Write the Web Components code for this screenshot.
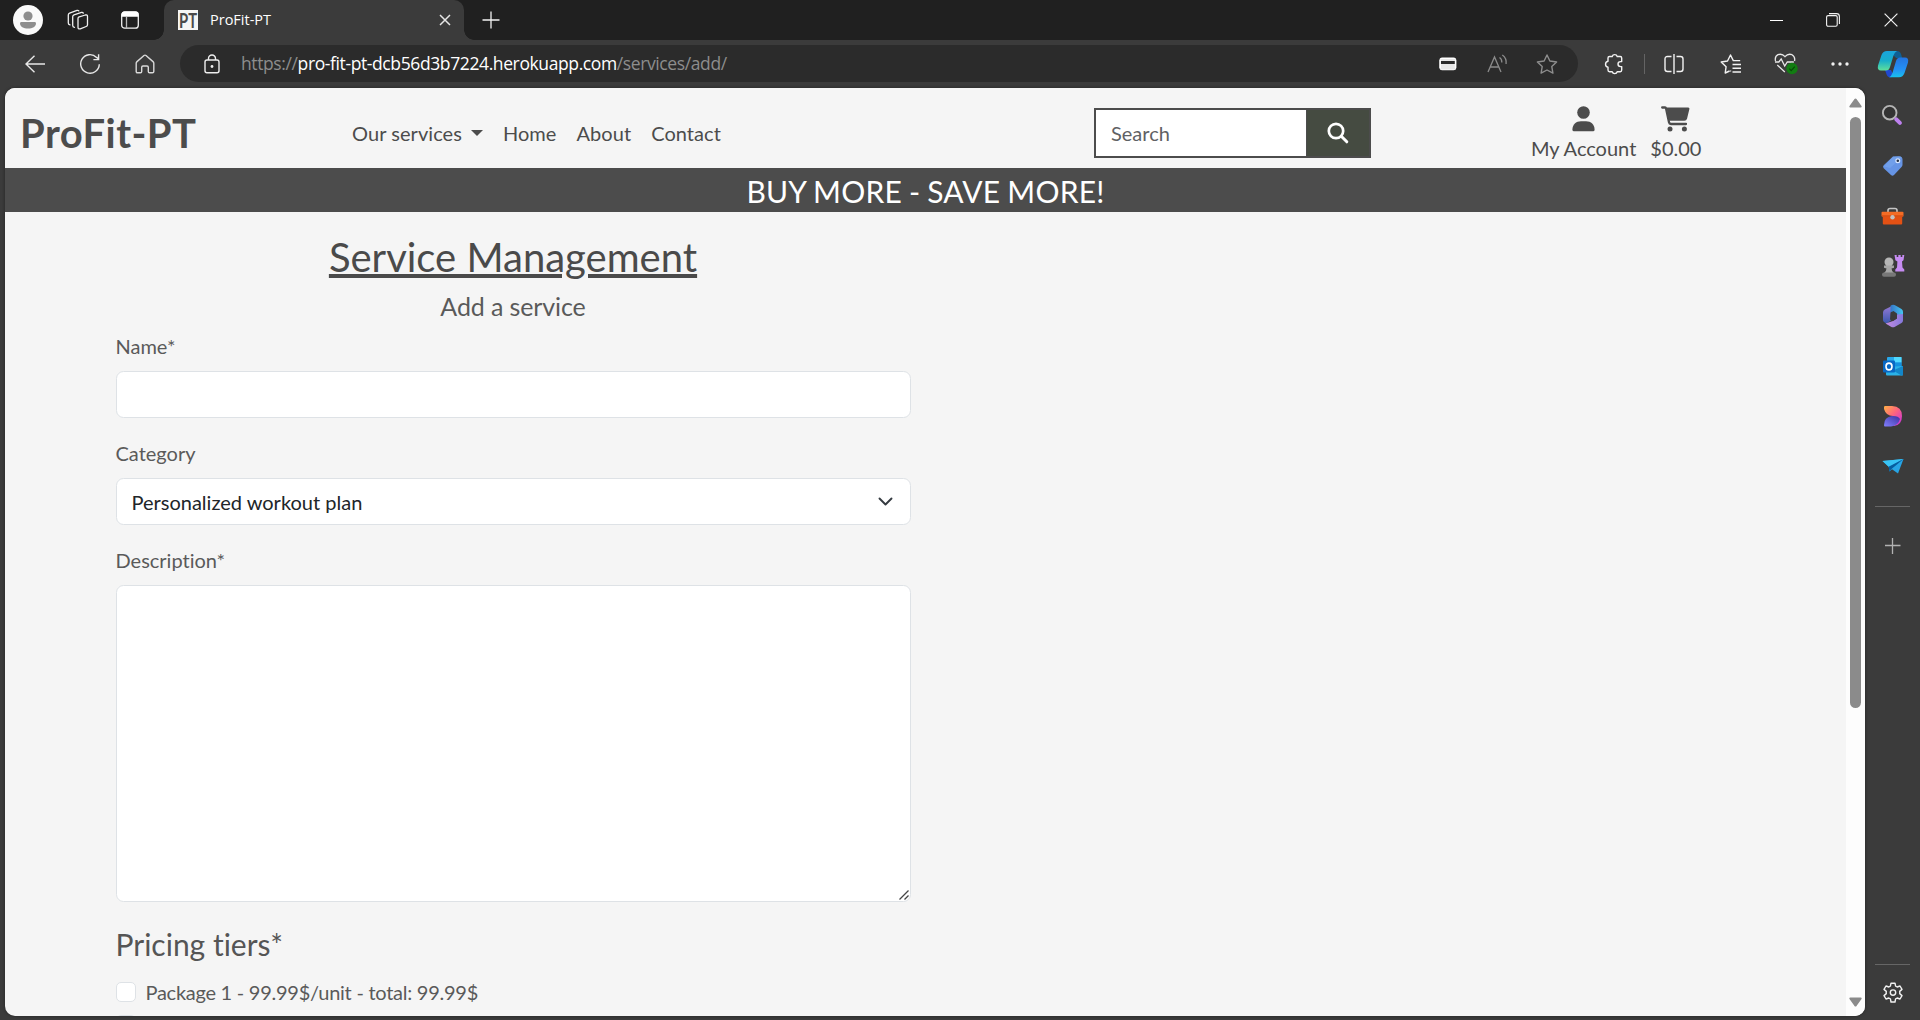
<!DOCTYPE html>
<html lang="en">
<head>
<meta charset="utf-8">
<title>ProFit-PT</title>
<style>
html,body{margin:0;height:100%;overflow:hidden;background:#3b3b3b}
body{font-family:Lato,"Liberation Sans",sans-serif;font-size:20px;line-height:30px;color:#4a4a4a;font-variant-ligatures:none}
</style>
</head>
<body>
<browser-window></browser-window>
<script>
const ICONS = {
avatar:[30,30,`<circle cx="15" cy="15" r="15" fill="#fafafa"/><circle cx="15" cy="11" r="4.6" fill="#8e8e8e"/><path d="M8 17h14q1 0 1 1.500c0 3-3.500 5-8 5s-8-2-8-5q0-1.500 1-1.500z" fill="#8e8e8e"/>`],
workspaces:[22,22,`<g fill="none" stroke="#f0f0f0" stroke-width="1.300" stroke-linejoin="round" stroke-linecap="round"><path d="M11.500 8.200l6.800-2.200q2.200-.5 2.200 1.500v8.200q0 1.300-1.300 1.800l-5.900 2.300q-2.300.7-2.300-1.500V10q0-1.400.5-1.800z"/><path d="M7.500 18.300q-1.800 0-1.800-1.800V7.800q0-1.400 1.300-1.900l7.500-2.500q1.200-.3 1.800.7"/><path d="M3 15.800q-1.700-.3-1.700-1.900V6q0-1.400 1.300-1.900L10 1.400q1.200-.3 1.800.5"/></g>`],
tabs:[20,20,`<rect x="1.700" y="2" width="16.600" height="16.200" rx="3" fill="none" stroke="#f2f2f2" stroke-width="1.300"/><path d="M1.500 6.800V4.500q0-3 3-3h11q3 0 3 3v2.300z" fill="#fff"/><path d="M6.500 7v11" stroke="#bbb" stroke-width="1.300"/>`],
x:[12,12,`<path d="M1 1l10 10M11 1L1 11" stroke="#e6e6e6" stroke-width="1.500"/>`],
plus:[18,18,`<path d="M9 .5v17M.5 9h17" stroke="#f2f2f2" stroke-width="1.300"/>`],
plusDim:[16,16,`<path d="M7.500 0v16M0 7.500h15.500" stroke="#b2b2b2" stroke-width="1.300"/>`],
min:[13,13,`<path d="M0 6.500h13" stroke="#fff"/>`],
restore:[14,14,`<g fill="none" stroke="#f4f4f4" stroke-width="1.100"><rect x=".6" y="2.600" width="10.600" height="10.600" rx="1.500"/><path d="M3 .6h7.500q2.900 0 2.900 2.900V11"/></g>`],
close:[14,14,`<path d="M.6.600l12.800 12.800M13.400.6L.6 13.400" stroke="#f0f0f0" stroke-width="1.200"/>`],
back:[20,18,`<path d="M9.500.8L1 9l8.500 8.200M1 9h19" fill="none" stroke="#e8e8e8" stroke-width="1.400"/>`],
reload:[22,22,`<path d="M20.300 11.300a9.300 9.300 0 1 1-2.700-6.900L19.500 6M19.600 1.300V6.600H14.400" fill="none" stroke="#e8e8e8" stroke-width="1.400"/>`],
home:[20,20,`<path d="M1.200 9.300q0-1 .8-1.700L9 1.500q1-.8 2 0l7 6.100q.8.700.8 1.700v8.200q0 1.300-1.300 1.300h-3q-1.200 0-1.200-1.300v-4.200q0-1.300-1.300-1.300H8q-1.300 0-1.300 1.300v4.200q0 1.300-1.200 1.300h-3q-1.300 0-1.300-1.300z" fill="none" stroke="#d9d9d9" stroke-width="1.400"/>`],
lock:[18,20,`<rect x="2" y="6" width="14" height="12.800" rx="2" fill="none" stroke="#eee" stroke-width="1.400"/><path d="M5.500 6V4.500a3.500 3.500 0 0 1 7 0V6" fill="none" stroke="#eee" stroke-width="1.400"/><circle cx="9" cy="12.500" r="1.400" fill="#eee"/>`],
card:[18,14,`<rect x="1.200" y="1.200" width="15.300" height="11.400" rx="2" fill="none" stroke="#fff" stroke-width="1.500"/><path d="M1.500 4h15v3h-15z" fill="#2b2b2b"/><path d="M1.500 2h15v2h-15zM1.500 7h15v5.500h-15z" fill="#e8e8e8"/><path d="M1.200 3v8M16.500 3v8" stroke="#fff" stroke-width="1.400"/>`],
aloud:[22,20,`<g fill="none" stroke="#8b8b8b" stroke-width="1.300"><path d="M1 18L7.500 3 14 18M3.300 13h8.500M12.500 3.500q2.500 1.600 2.300 5M15.300 1q4.500 3 3.800 9"/></g>`],
star:[22,20,`<path d="M11 1l2.900 6 6.700 1-4.800 4.600 1.100 6.500-5.900-3.100-5.900 3.100 1.100-6.500L1.400 8l6.700-1z" fill="none" stroke="#8e8e8e" stroke-width="1.400" stroke-linejoin="round"/>`],
puzzle:[20,22,`<path d="M4 5q0-1.500 1.500-1.500h2.700a2.600 2.600 0 0 1 5 0h3q1.500 0 1.500 1.500v3.600h-1.200a2.500 2.500 0 0 0 0 5h1.200V17q0 1.700-1.500 1.700h-3a2.600 2.600 0 0 1-5 0H5.500Q4 18.700 4 17v-2.900a3 3 0 0 1 0-5.900z" fill="none" stroke="#f2f2f2" stroke-width="1.400" stroke-linejoin="round"/>`],
split:[20,20,`<path d="M7.500 2.500h-4q-2.500 0-2.500 2.500v10q0 2.500 2.500 2.500h4M12.500 2.500h4q2.500 0 2.500 2.500v10q0 2.500-2.500 2.500h-4M10 0v20" fill="none" stroke="#f2f2f2" stroke-width="1.400"/>`],
favs:[22,20,`<path d="M9.500 17l-4.300 2 .9-6.300L1.200 8l6.300-1L10.500 1l2.800 5.600h6.900M10.500 16.400v1M12.500 10.500H21M12.500 14.300H21M12.500 18H21" fill="none" stroke="#f2f2f2" stroke-width="1.400" stroke-linejoin="round"/>`],
heart:[24,22,`<path d="M1.500 8Q.5 3.500 4 1.700q4-1.500 7 2 3-3.500 7-2 3.500 2 2.500 6.300M3.300 12l7.500 7M1 9h3.800l2.400-3 3.500 7 2.600-4h6.500" fill="none" stroke="#e8e8e8" stroke-width="1.300"/><circle cx="18" cy="15.500" r="5.700" fill="#127c12"/><path d="M15.300 15.700l1.900 1.900 3.600-3.900" fill="none" stroke="#064a06" stroke-width="1.200"/>`],
dots:[18,4,`<circle cx="2" cy="2" r="1.700" fill="#f2f2f2"/><circle cx="9" cy="2" r="1.700" fill="#f2f2f2"/><circle cx="16" cy="2" r="1.700" fill="#f2f2f2"/>`],
copilot:[32,28,`<defs><linearGradient id="a" x1="0" y1="0" x2="0" y2="1"><stop stop-color="#1aa4dd"/><stop offset=".5" stop-color="#18aecb"/><stop offset="1" stop-color="#5fe09a"/></linearGradient><linearGradient id="b" x1="0" y1="0" x2="0" y2="1"><stop stop-color="#2474e0"/><stop offset=".6" stop-color="#2490f5"/><stop offset="1" stop-color="#19c1ee"/></linearGradient></defs><path d="M16 1h4q3 0 4 3l1.200 4h-6L16 5z" fill="#0f5f94"/><path d="M8 20h6l3 6q-1.500 1.500-4 1.200-2.500 0-3.500-3z" fill="#2049cf"/><path d="M10 1h10q-2.500 1-3.500 4.500L13 17q-1 3.500-4 3.500H4q-4 0-3-5L4.500 5Q6 1 10 1z" fill="url(#a)"/><path d="M22 27.200H12q2.500-1 3.500-4.500L19 11q1-3.500 4-3.500h5q4 0 3 5L27.500 23q-1.500 4.200-5.500 4.200z" fill="url(#b)"/>`],
user:[23,26,`<circle cx="11.500" cy="6.500" r="6.300" fill="#4c4c4c"/><path d="M.4 23.700C.4 18.600 4 15.300 9 15.300h5c5 0 8.600 3.300 8.600 8.400q0 1.600-1.600 1.600H2Q.4 25.300.4 23.700z" fill="#4c4c4c"/>`],
cart:[29,26,`<path d="M1.200 1.500h2.900q.7 0 .9.800l3 14q.3 1.700 2 1.700h15" fill="none" stroke="#4c4c4c" stroke-width="2.300" stroke-linecap="round" stroke-linejoin="round"/><path d="M5.500 1.500h21.700q1.600 0 1.200 1.600l-2.300 9.400q-.6 2.300-2.700 2.300H8z" fill="#4c4c4c"/><circle cx="9" cy="22.900" r="2.500" fill="#4c4c4c"/><circle cx="23.400" cy="22.900" r="2.500" fill="#4c4c4c"/>`],
glass:[22,22,`<circle cx="9" cy="9" r="7.200" fill="none" stroke="#fff" stroke-width="2.700"/><path d="M14.300 14.300l5.500 5.500" stroke="#fff" stroke-width="3" stroke-linecap="round"/>`],
chevron:[15,10,`<path d="M1.500 1.500l6 6 6-6" fill="none" stroke="#343a40" stroke-width="1.900" stroke-linecap="round" stroke-linejoin="round"/>`],
resize:[10,10,`<path d="M.5 9.500l9-9M5.500 9.500l4-4" stroke="#444" stroke-width="1.300"/>`],
caret:[12,6,`<path d="M0 0h12L6 6z" fill="#4c4c4c"/>`],
up:[13,10,`<path d="M6.500.5q.6 0 1 .6l5 7q.6 1.400-.8 1.400H1.300Q-.1 9.500.5 8.100l5-7q.4-.6 1-.6z" fill="#8b8b8b"/>`],
down:[13,10,`<path d="M6.500 9.500q-.6 0-1-.6l-5-7Q-.1.500 1.300.500h10.400q1.400 0 .8 1.400l-5 7q-.4.600-1 .6z" fill="#8b8b8b"/>`],
sSearch:[22,22,`<circle cx="8.700" cy="8.700" r="6.800" fill="#333" stroke="#b5b5b5" stroke-width="1.900"/><path d="M15.300 15.300l3.600 3.600" stroke="#bd80ee" stroke-width="4" stroke-linecap="round"/>`],
sTag:[22,22,`<path d="M11 1.500l6-.3q3.500.2 3.500 3.300v5.300q0 1.200-1 2.200l-7.500 8q-1.600 1.300-3 0L1.700 13.300q-1.400-1.500 0-3z" fill="#6694e5"/><path d="M2 11.500L11 1.500l6-.3q2 .1 3 1.300L8 13z" fill="#83aff2" opacity=".4"/><circle cx="15.800" cy="5.700" r="1.900" fill="#253145" stroke="#d9e7ff" stroke-width="1.200"/>`],
sTool:[23,18,`<path d="M7 6V3.500Q7 1.500 9 1.500h5q2 0 2 2V6" fill="none" stroke="#c5c5c5" stroke-width="1.600"/><rect x="1.800" y="8" width="19.400" height="9.500" rx="1" fill="#e35114"/><rect x=".5" y="4.800" width="22" height="5" rx="1" fill="#f46c25"/><path d="M1 9h21" stroke="#c63e0b"/><circle cx="11.500" cy="10.200" r="2.200" fill="#c2c2c2"/>`],
sChess:[24,24,`<path d="M13.500 1h2.200v2h1.600V1h2.400v2h1.600V1h2l-.8 5.200-1.500 1.200.5 6 1.800 2v2h-9v-2l1.700-2 .4-6-2-1.200z" fill="#c68cf2"/><circle cx="8" cy="8" r="4.500" fill="#b6b6b6"/><path d="M3 11.500h10v2.300l-2.500.7q.2 3 2.500 4.500H3q2.300-1.500 2.500-4.500L3 13.800z" fill="#a6a6a6"/><rect x="1" y="18.500" width="14" height="4.300" rx="2" fill="#777"/>`],
s365:[22,24,`<defs><linearGradient id="m" x1="0" y1="0" x2="0" y2="1"><stop stop-color="#9b7cd8"/><stop offset="1" stop-color="#3957ad"/></linearGradient><linearGradient id="n"><stop stop-color="#3576c8"/><stop offset="1" stop-color="#45c5ef"/></linearGradient><linearGradient id="o"><stop stop-color="#c58be0"/><stop offset="1" stop-color="#8478dc"/></linearGradient></defs><path d="M12 1L2.800 5.500Q1 6.600 1 8.600V16q0 1.500 1.300 2.300l2.200 1.200L9 16.500V8l3-3z" fill="url(#m)"/><path d="M8.500 1.800Q11-.200 13.500 1.500l6 3.500Q21 6 21 8v5.500l-6-3L8.500 8z" fill="url(#n)"/><path d="M21 10v6.500q0 1.500-1.500 2.500l-6.500 3.700q-2 1-4 0l-5.500-3.200L11 17l4-2.500v-4z" fill="url(#o)"/><path d="M8.500 8.500L11.500 7l3.500 2.500v4.800L11 17l-3-1.500z" fill="#3b3b3b"/>`],
sOutlook:[22,20,`<rect x="5" y="1" width="14.500" height="15" rx="1" fill="#28a8ea"/><path d="M12 1h7.500v5.500H12z" fill="#50d9ff"/><path d="M12 6.500h7.500V12H12z" fill="#1490df"/><path d="M4 11l17-1v8.500q0 1-1 1H5q-1 0-1-1z" fill="#2ab2e8"/><path d="M21 10v9q-.5.500-1.500.5L11 14.500z" fill="#1386c9"/><rect x="1" y="4.500" width="12" height="12" rx="1" fill="#0968c4"/><ellipse cx="7" cy="10.500" rx="3" ry="3.400" fill="none" stroke="#fff" stroke-width="1.600"/>`],
sDesign:[20,22,`<defs><linearGradient id="d" x1="0" y1="0" x2="1" y2="1"><stop stop-color="#ffb145"/><stop offset=".45" stop-color="#ff667c"/><stop offset="1" stop-color="#c12be8"/></linearGradient><linearGradient id="e" x1="0" y1="1" x2="1" y2="0"><stop stop-color="#8280ff"/><stop offset="1" stop-color="#3b309f"/></linearGradient></defs><path d="M1 2.200Q1 1 2.200 1H9q10 .3 10 10 0 9-8 10-4-5-1-10-7 0-9-7z" fill="url(#d)"/><path d="M1 20q0-8 8-9 6-.500 8 3-2 7-9 7.500H2Q1 21.500 1 20z" fill="url(#e)"/>`],
sPlane:[22,16,`<path d="M.5 3L21.500 1 16 15.500l-6-4.300-2.500 2.300-.8-4.800z" fill="#27a4e5"/><path d="M.5 3L21.500 1 6.700 8.700z" fill="#39c4f5"/><path d="M6.700 8.700L21.500 1 9.500 11l-2 2.500z" fill="#075d9f"/>`],
gear:[22,22,`<path d="M9 1.200h4l.6 3q.8.300 1.500.8l2.900-1 2 3.400-2.300 2q.2.800 0 2.200l2.300 2-2 3.400-2.900-1q-.7.500-1.500.8l-.6 3.200H9l-.6-3.200q-.8-.3-1.500-.8l-2.900 1-2-3.400 2.300-2q-.2-1.200 0-2.200L2 7.400 4 4l2.900 1q.7-.5 1.500-.8z" fill="none" stroke="#f2f2f2" stroke-width="1.400" stroke-linejoin="round"/><circle cx="11" cy="10.600" r="2.700" fill="none" stroke="#f2f2f2" stroke-width="1.400"/>`]
};
function define(name, html){
  customElements.define(name, class extends HTMLElement{
    constructor(){super();this.attachShadow({mode:'open'}).innerHTML=html;}
  });
}
customElements.define('ui-icon', class extends HTMLElement{
  connectedCallback(){
    if(this.shadowRoot) return;
    const [w,h,body]=ICONS[this.getAttribute('name')];
    this.attachShadow({mode:'open'}).innerHTML=`<style>:host{display:inline-flex;flex:none;width:${w}px;height:${h}px}svg{display:block}</style><svg width="${w}" height="${h}" viewBox="0 0 ${w} ${h}" aria-hidden="true">${body}</svg>`;
  }
});
define('icon-cell',`<style>:host{display:flex;flex:none;align-items:center;justify-content:center;height:100%;box-sizing:border-box}</style><slot></slot>`);
define('browser-tab',`<style>
:host{display:flex;align-items:center;box-sizing:border-box;width:300px;height:40px;margin-left:4px;padding:0 13.500px 0 14px;background:#3b3b3b;border-radius:10px 10px 0 0;position:relative;font:14.500px/20px "Open Sans","Noto Sans",sans-serif;color:#fff}
:host::before,:host::after{content:"";position:absolute;bottom:0;width:10px;height:10px}
:host::before{left:-10px;background:radial-gradient(circle at 0 0,transparent 9.500px,#3b3b3b 10px)}
:host::after{right:-10px;background:radial-gradient(circle at 100% 0,transparent 9.500px,#3b3b3b 10px)}
.fav{width:20px;height:20px;margin-right:12px;flex:none;overflow:visible}
.t{flex:1;letter-spacing:0}
</style><svg class="fav" viewBox="0 0 20 20"><rect width="20" height="20" fill="#f5f5f5"/><text x="1" y="17.500" font-family="Lato" font-weight="700" font-size="21" fill="#4a4a4a" textLength="18" lengthAdjust="spacingAndGlyphs">PT</text></svg><span class="t"><slot></slot></span><ui-icon name="x"></ui-icon>`);
define('tab-strip',`<style>:host{display:flex;height:40px;background:#202020}.sp{flex:1}</style>
<icon-cell style="width:56px"><ui-icon name="avatar"></ui-icon></icon-cell>
<icon-cell style="width:44px"><ui-icon name="workspaces"></ui-icon></icon-cell>
<icon-cell style="width:60px"><ui-icon name="tabs"></ui-icon></icon-cell>
<browser-tab>ProFit-PT</browser-tab>
<icon-cell style="width:54px"><ui-icon name="plus"></ui-icon></icon-cell>
<span class="sp"></span>
<icon-cell style="width:56px"><ui-icon name="min"></ui-icon></icon-cell>
<icon-cell style="width:58px"><ui-icon name="restore"></ui-icon></icon-cell>
<icon-cell style="width:58px"><ui-icon name="close"></ui-icon></icon-cell>`);
define('tool-bar',`<style>:host{display:flex;height:48px;align-items:center}
.nav{display:flex;width:180px;height:46px;padding-left:7.500px;box-sizing:border-box}
.url{display:flex;align-items:center;width:1398px;height:37px;margin-top:-1px;border-radius:19px;background:#2b2b2b;font:17.500px/24px "Open Sans","Noto Sans",sans-serif;color:#8d8d8d;white-space:pre}
.url b{font-weight:400;color:#fff}.a{flex:1;letter-spacing:-.39px;padding-bottom:2px}
.div{width:1px;height:20px;background:#646464}.r{display:flex;align-items:center;flex:1;height:46px}</style>
<div class="nav"><icon-cell style="width:55px"><ui-icon name="back"></ui-icon></icon-cell><icon-cell style="width:55px"><ui-icon name="reload"></ui-icon></icon-cell><icon-cell style="width:55px"><ui-icon name="home"></ui-icon></icon-cell></div>
<div class="url"><icon-cell style="width:61px;padding-left:3px"><ui-icon name="lock"></ui-icon></icon-cell><span class="a">https://<b>pro-fit-pt-dcb56d3b7224.herokuapp.com</b>/services/add/</span>
<icon-cell style="width:50px"><ui-icon name="card"></ui-icon></icon-cell><icon-cell style="width:50px"><ui-icon name="aloud"></ui-icon></icon-cell><icon-cell style="width:55px;padding-right:7px"><ui-icon name="star"></ui-icon></icon-cell></div>
<div class="r"><icon-cell style="width:66px;padding-left:5px"><ui-icon name="puzzle"></ui-icon></icon-cell><span class="div"></span>
<icon-cell style="width:58px"><ui-icon name="split"></ui-icon></icon-cell><icon-cell style="width:55px"><ui-icon name="favs"></ui-icon></icon-cell><icon-cell style="width:56px"><ui-icon name="heart"></ui-icon></icon-cell><icon-cell style="width:52px"><ui-icon name="dots"></ui-icon></icon-cell><icon-cell style="width:54px"><ui-icon name="copilot"></ui-icon></icon-cell></div>`);
define('side-bar',`<style>:host{display:flex;flex-direction:column;width:55px;box-sizing:border-box;padding-top:3px;align-items:center}
icon-cell{height:50px;width:55px}hr{width:35px;height:1px;border:0;margin:15px 0 14px;background:#666}.sp{flex:1}</style>
<icon-cell style="padding:0 1px 2px 0"><ui-icon name="sSearch"></ui-icon></icon-cell><icon-cell><ui-icon name="sTag"></ui-icon></icon-cell><icon-cell><ui-icon name="sTool"></ui-icon></icon-cell><icon-cell><ui-icon name="sChess"></ui-icon></icon-cell><icon-cell><ui-icon name="s365"></ui-icon></icon-cell><icon-cell><ui-icon name="sOutlook"></ui-icon></icon-cell><icon-cell style="padding-bottom:1px"><ui-icon name="sDesign"></ui-icon></icon-cell><icon-cell><ui-icon name="sPlane"></ui-icon></icon-cell>
<hr><icon-cell><ui-icon name="plusDim"></ui-icon></icon-cell><span class="sp"></span><hr style="margin:0 0 3px"><icon-cell style="margin-bottom:2px"><ui-icon name="gear"></ui-icon></icon-cell>`);
define('scroll-bar',`<style>:host{display:flex;flex-direction:column;align-items:center;width:19px;flex:none;background:#fdfdfd;box-sizing:border-box;padding:10px 0 9px}
.thumb{width:11px;height:591px;margin-top:9px;border-radius:6px;background:#8b8b8b}.sp{flex:1}</style><ui-icon name="up"></ui-icon><div class="thumb"></div><span class="sp"></span><ui-icon name="down"></ui-icon>`);
define('search-box',`<style>:host{display:flex;width:277px;height:50px;box-sizing:border-box;border:2px solid #4c4c4c;background:#fff}
span{flex:1;padding:8px 0 0 15px;color:#5f6164}
i{display:flex;width:62px;background:#454b41;border-left:1px solid #4c4c4c;align-items:center;justify-content:center}</style><span>Search</span><i><ui-icon name="glass"></ui-icon></i>`);
define('account-link',`<style>:host{display:flex;flex-direction:column;align-items:center;gap:1px;height:60px;white-space:nowrap}</style><slot name="icon"></slot><span><slot></slot></span>`);
define('site-header',`<style>:host{display:grid;grid-template-columns:347px 742px 437px auto;height:80px;background:#f5f5f5;color:#4c4c4c;align-items:start}
.brand{padding:15px 0 0 15px;font-weight:700;font-size:40px;line-height:60px;letter-spacing:.45px}
nav{display:flex;padding-top:30px;gap:20px}nav span{display:flex;align-items:center;gap:9px;letter-spacing:.06px}
search-box{margin-top:20px}.acc{display:flex;gap:14px;padding-top:18px}</style>
<div class="brand">ProFit-PT</div>
<nav><span>Our services <ui-icon name="caret"></ui-icon></span><span>Home</span><span>About</span><span>Contact</span></nav>
<search-box></search-box>
<div class="acc"><account-link><ui-icon slot="icon" name="user"></ui-icon>My Account</account-link><account-link><ui-icon slot="icon" name="cart"></ui-icon>$0.00</account-link></div>`);
define('promo-banner',`<style>:host{display:block;height:44px;background:#4c4c4c;color:#fff;text-align:center;font-size:30px;line-height:46px;letter-spacing:.24px;word-spacing:-1px}</style><slot></slot>`);
define('form-field',`<style>:host{display:flex;flex-direction:column;gap:10px;margin-bottom:20px;color:#5a5a5a}
.box{display:flex;justify-content:space-between;align-items:center;box-sizing:border-box;height:var(--h,47px);background:#fff;border:1px solid #dee2e6;border-radius:7.500px;padding:0 17px 0 15px;color:#212529}
:host([area]) .box{align-items:flex-end;padding:0 1px 1px}</style><label><slot name="label"></slot></label><div class="box"><slot></slot></div>`);
define('check-row',`<style>:host{display:flex;align-items:center;height:30px;gap:10px;color:#5a5a5a;letter-spacing:-.26px}i{width:20px;height:20px;box-sizing:border-box;border:1px solid #dee2e6;border-radius:5px;background:#fff}</style><i></i><span><slot></slot></span>`);
define('service-form',`<style>:host{display:block;width:795px;padding:21px 0 0 110.500px}
h1,h2,h3{font-weight:400;margin:0}
h1{font-size:40px;line-height:48px;text-align:center;text-decoration:underline;color:#4a4a4a}
h2{font-size:25px;line-height:30px;text-align:center;margin:10px 0;color:#5a5a5a;letter-spacing:-.12px}
h3{font-size:30px;line-height:36px;margin:24px 0 15px;color:#555}</style>
<h1>Service Management</h1><h2>Add a service</h2>
<form-field><span slot="label">Name*</span></form-field>
<form-field><span slot="label">Category</span><span>Personalized workout plan</span><ui-icon name="chevron"></ui-icon></form-field>
<form-field area style="--h:317px"><span slot="label">Description*</span><span></span><ui-icon name="resize"></ui-icon></form-field>
<h3>Pricing tiers*</h3>
<check-row>Package 1 - 99.99$/unit - total: 99.99$</check-row>
<check-row style="margin-top:3px"></check-row>`);
define('browser-window',`<style>:host{display:flex;flex-direction:column;width:1920px;height:1020px;background:#3b3b3b}
main{display:flex;height:932px}.page{display:flex;width:1860px;height:928px;margin-left:5px;border-radius:10px;overflow:hidden;background:#f5f5f5;box-shadow:0 0 3px #222}.doc{flex:1;min-width:0;overflow:hidden}</style>
<tab-strip></tab-strip><tool-bar></tool-bar>
<main><div class="page"><div class="doc"><site-header></site-header><promo-banner>BUY MORE - SAVE MORE!</promo-banner><service-form></service-form></div><scroll-bar></scroll-bar></div><side-bar></side-bar></main>`);
</script>
</body>
</html>
